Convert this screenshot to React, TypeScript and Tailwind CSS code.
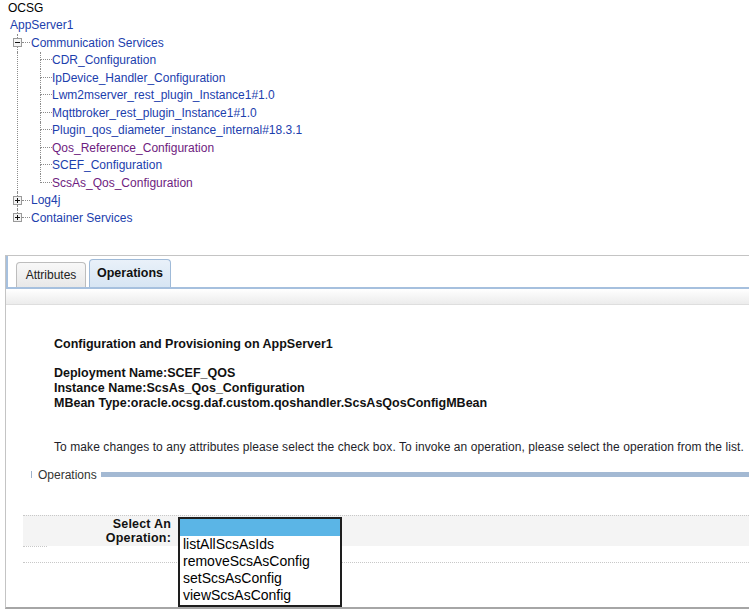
import React from "react";

const LINK = "text-[#1c40ad]";
const VISITED = "text-[#6e1c80]";

const children = [
  { label: "CDR_Configuration" },
  { label: "IpDevice_Handler_Configuration" },
  { label: "Lwm2mserver_rest_plugin_Instance1#1.0" },
  { label: "Mqttbroker_rest_plugin_Instance1#1.0" },
  { label: "Plugin_qos_diameter_instance_internal#18.3.1" },
  { label: "Qos_Reference_Configuration", visited: true },
  { label: "SCEF_Configuration" },
  { label: "ScsAs_Qos_Configuration", visited: true },
];

const operations = ["listAllScsAsIds", "removeScsAsConfig", "setScsAsConfig", "viewScsAsConfig"];

const ToggleBox = ({ open }: { open: boolean }) => (
  <svg width="9" height="9" viewBox="0 0 9 9" className="shrink-0">
    <rect x="0.5" y="0.5" width="8" height="8" fill="#f4f4f4" stroke="#9a9a9a" />
    <line x1="2" y1="4.5" x2="7" y2="4.5" stroke="#111" />
    {!open && <line x1="4.5" y1="2" x2="4.5" y2="7" stroke="#111" />}
  </svg>
);

const RootRow = ({ label, open, last }: { label: string; open: boolean; last?: boolean }) => (
  <div className="flex h-[17.5px] items-center">
    <div className="flex w-[9px] flex-col items-center self-stretch">
      <div className="w-0 flex-1 border-l border-dotted border-[#8c8c8c]" />
      <ToggleBox open={open} />
      <div className={`w-0 flex-1 border-l border-dotted ${last ? "border-transparent" : "border-[#8c8c8c]"}`} />
    </div>
    <div className="h-0 w-[8px] border-t border-dotted border-[#8c8c8c]" />
    <span className={`ml-px ${LINK}`}>{label}</span>
  </div>
);

const Tree = () => (
  <div className="ml-[13px]">
    <RootRow label="Communication Services" open />
    <div className="flex">
      <div className="flex w-[9px] justify-center">
        <div className="w-0 border-l border-dotted border-[#8c8c8c]" />
      </div>
      <div className="ml-[18px] flex flex-col">
        {children.map((c, i) => (
          <div key={c.label} className="flex h-[17.5px] items-center">
            <div className="flex w-[12px] flex-col self-stretch">
              <div className="h-1/2 border-b border-l border-dotted border-[#8c8c8c]" />
              <div
                className={`flex-1 border-l border-dotted ${
                  i === children.length - 1 ? "border-transparent" : "border-[#8c8c8c]"
                }`}
              />
            </div>
            <span className={c.visited ? VISITED : LINK}>{c.label}</span>
          </div>
        ))}
      </div>
    </div>
    <RootRow label="Log4j" open={false} />
    <RootRow label="Container Services" open={false} last />
  </div>
);

export default function App() {
  return (
    <div
      className="h-[609px] w-[749px] overflow-hidden bg-white text-[12px] text-[#1c1c1c]"
      style={{ fontFamily: "'Liberation Sans', Arial, sans-serif" }}
    >
      <div className="flex h-4 items-center pl-2 text-black">OCSG</div>
      <div className={`flex h-[18px] items-center pl-[10px] ${LINK}`}>AppServer1</div>
      <Tree />

      <div className="ml-[5px] mt-[28.5px] w-[800px] border-l border-t border-b-2 border-[#c4c4c4] border-b-[#a6a6a6]">
        {/* tab strip */}
        <div className="flex h-[33px] items-end gap-[3px] border-b-2 border-l-2 border-[#a6c0de] pl-[8px]">
          <div className="flex h-[25px] w-[70px] items-center justify-center rounded-t-[4px] border border-b-0 border-[#bdbdbd] bg-gradient-to-b from-[#f8f8f8] to-[#e8e8e8] text-[#222]">
            Attributes
          </div>
          <div className="flex h-[28px] w-[82px] items-center justify-center rounded-t-[4px] border border-b-0 border-[#9fbad8] bg-gradient-to-b from-[#e9f1f9] to-[#d7e5f3] text-[12.5px] font-bold text-[#111]">
            Operations
          </div>
        </div>
        <div className="h-[16px] border-b border-[#dedede] bg-gradient-to-b from-white to-[#ececec]" />

        <div className="pl-[48px] pt-[32px]">
          <div className="text-[12.5px] font-bold leading-[15px] text-[#111]">
            <p>Configuration and Provisioning on AppServer1</p>
            <p className="mt-[14px]">Deployment Name:SCEF_QOS</p>
            <p>Instance Name:ScsAs_Qos_Configuration</p>
            <p>MBean Type:oracle.ocsg.daf.custom.qoshandler.ScsAsQosConfigMBean</p>
          </div>
          <p className="mt-[29px] leading-[15px] tracking-[0.08px] text-[#1e1e2a]">
            To make changes to any attributes please select the check box. To invoke an operation, please select the
            operation from the list.
          </p>
        </div>

        <div className="mt-[12px] flex h-[15px] items-center pl-[25px]">
          <div className="h-[7px] w-px bg-[#9fb3cc]" />
          <span className="ml-[6px] text-[#333]">Operations</span>
          <div className="ml-[4px] h-[5px] flex-1 bg-[#a3b9d3]" />
        </div>

        <div className="relative ml-[17px] mt-[32.5px]">
          <div className="flex h-[31px] border-t border-dotted border-[#c8c8c8] bg-[#f4f4f4]">
            <div className="w-[148px] pt-px text-right text-[12.5px] font-bold leading-[14px] tracking-[0.2px] text-[#111]">
              <p>Select An</p>
              <p>Operation:</p>
            </div>
          </div>
          <div className="w-[24px] border-t border-dotted border-[#c8c8c8]" />
          <div className="h-[15px]" />
          <div className="border-t border-dotted border-[#c8c8c8]" />
          <div className="h-[44px]" />

          <div className="absolute left-[155px] top-[2px] h-[90px] w-[164px] border-2 border-[#1e1e1e] bg-white text-[14px] leading-[17px] text-black">
            <div className="h-[17px] bg-[#5bb5e6]" />
            {operations.map((op) => (
              <div key={op} className="pl-[3px]">
                {op}
              </div>
            ))}
          </div>
        </div>
      </div>
    </div>
  );
}
